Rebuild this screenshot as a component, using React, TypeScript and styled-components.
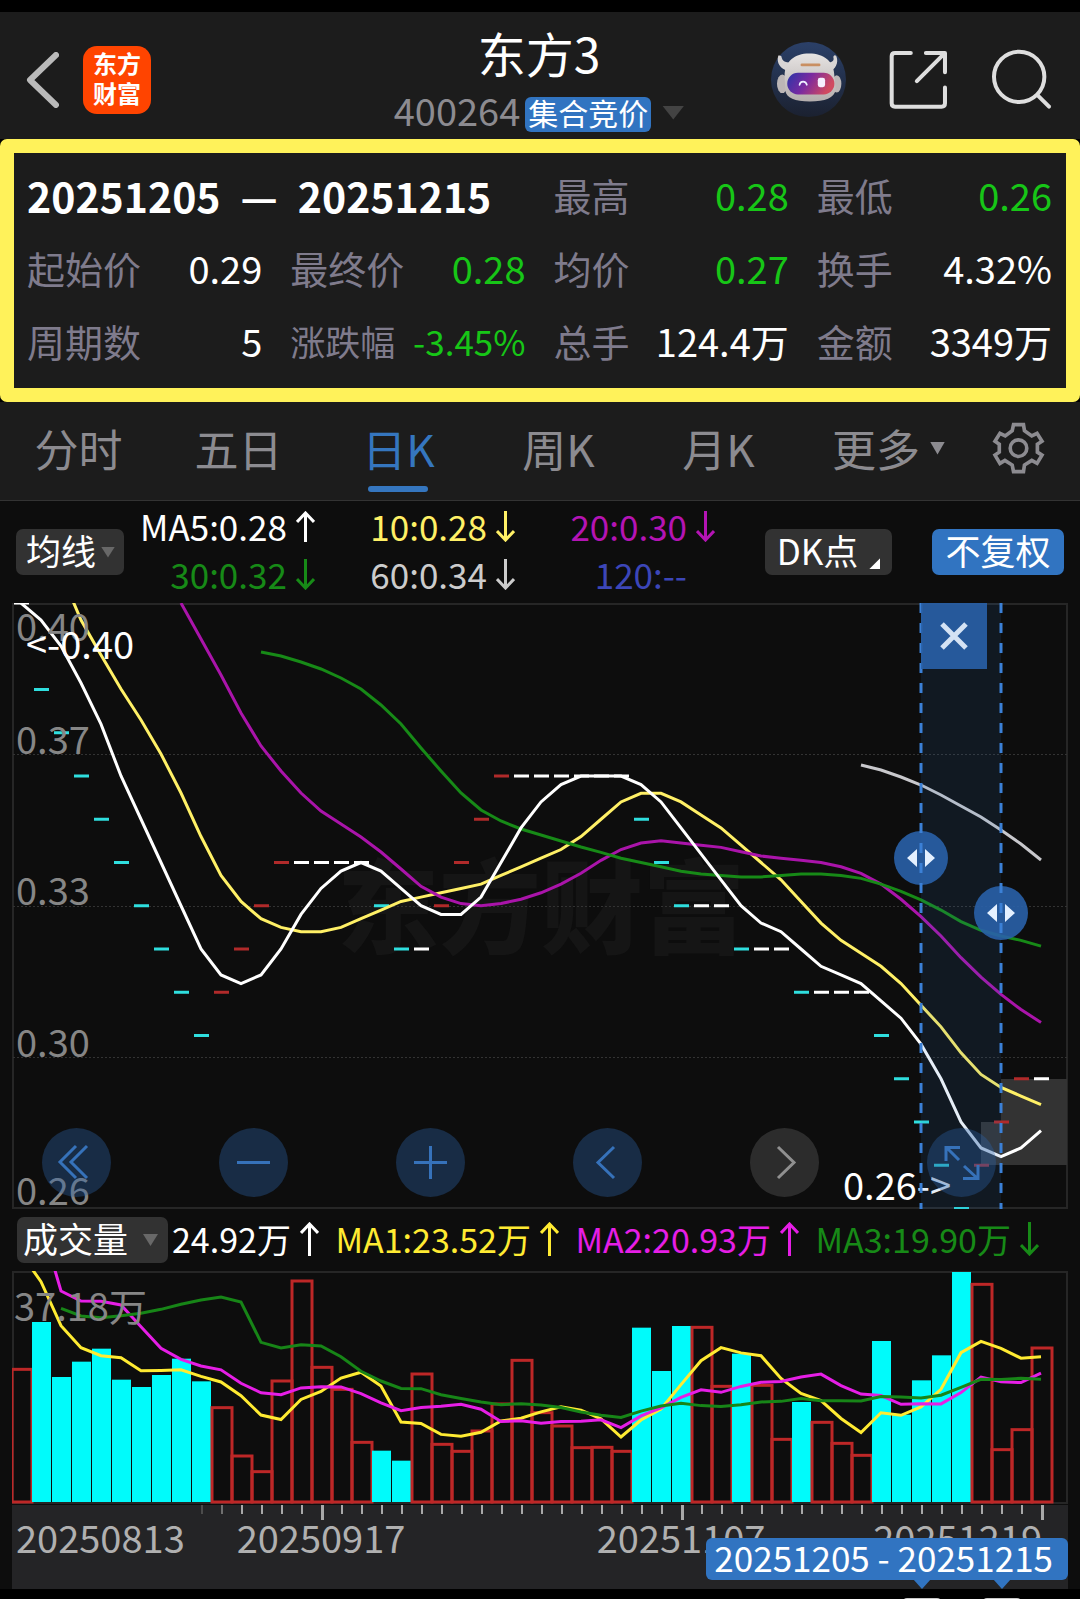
import React from "react";
import styled, { createGlobalStyle } from "styled-components";

const color = {
  header: "#1c1c1c",
  page: "#0d0d0d",
  accent: "#3174c1",
  muted: "#8c8b90",
  label: "#7f7b8c",
  green: "#17c617",
  frame: "#262626",
  cyan: "#00fbfb",
  red: "#bd2727",
};

const GlobalStyle = createGlobalStyle`
  * { box-sizing: border-box; }
  body {
    margin: 0;
    background: #000;
    color: #fff;
    font-family: "Noto Sans CJK SC", "Noto Sans", sans-serif;
  }
  button, select {
    margin: 0;
    padding: 0;
    border: 0;
    background: none;
    color: inherit;
    font: inherit;
    cursor: pointer;
  }
  svg { display: block; }
  dl, dt, dd, h1, p { margin: 0; }
`;

const Page = styled.main`
  padding-top: 12px;
  background: #000;
`;

/* ---------- header ---------- */

const Header = styled.header`
  display: grid;
  grid-template-columns: 1fr auto 1fr;
  align-items: center;
  height: 127px;
  padding: 0 28px 0 26px;
  background: ${color.header};
`;

const HeaderSide = styled.div<{ $end?: boolean; $gap: number }>`
  display: flex;
  align-items: center;
  justify-content: ${(p) => (p.$end ? "flex-end" : "flex-start")};
  gap: ${(p) => p.$gap}px;
  padding-top: 8px;
`;

const IconButton = styled.button`
  display: flex;
  align-items: center;
  justify-content: center;
  flex: none;
`;

const Logo = styled.a`
  display: flex;
  flex-direction: column;
  align-items: center;
  justify-content: center;
  width: 68px;
  height: 68px;
  padding-bottom: 4px;
  border-radius: 14px;
  background: #ff4400;
  color: #fff;
  font-size: 24px;
  font-weight: 700;
  line-height: 30px;
  text-decoration: none;
`;

const Titles = styled.div`
  display: flex;
  flex-direction: column;
  align-items: center;
`;

const Title = styled.h1`
  font-size: 48px;
  font-weight: 400;
  line-height: 66px;
`;

const SubTitle = styled.div`
  display: flex;
  align-items: flex-end;
  height: 48px;
  padding-bottom: 1px;

  button { height: 38px; }
`;

const Code = styled.span`
  margin-right: 5px;
  color: ${color.muted};
  font-size: 38px;
  line-height: 44px;
`;

const Badge = styled.span`
  margin-right: 11px;
  padding: 0 3px 4px;
  border-radius: 6px;
  background: ${color.accent};
  font-size: 30px;
  line-height: 31px;
`;

/* ---------- interval statistics ---------- */

const Stats = styled.dl`
  display: grid;
  grid-template-columns: repeat(4, 1fr);
  column-gap: 28px;
  grid-auto-rows: 73px;
  padding: 5px 14px 11px 13px;
  border: 14px solid #fff25a;
  border-radius: 7px;
  background: ${color.header};
`;

const Stat = styled.div<{ $tight?: boolean }>`
  display: flex;
  align-items: center;
  justify-content: space-between;
  font-size: ${(p) => (p.$tight ? 35 : 38)}px;
  line-height: 48px;
  white-space: nowrap;
`;

const StatName = styled.dt`
  color: ${color.label};
`;

const StatValue = styled.dd<{ $down?: boolean }>`
  color: ${(p) => (p.$down ? color.green : "#fff")};
`;

const Range = styled.div`
  display: flex;
  align-items: center;
  gap: 20px;
  grid-column: span 2;
  font-size: 41px;
  font-weight: 700;
  line-height: 48px;
  white-space: nowrap;
`;

/* ---------- period tabs ---------- */

const Tabs = styled.nav`
  display: grid;
  grid-template-columns: repeat(6, 4fr) 3fr;
  height: 99px;
  border-bottom: 1px solid #333;
  background: ${color.header};
`;

const Tab = styled.button<{ $active?: boolean; $more?: boolean }>`
  display: flex;
  align-items: center;
  justify-content: center;
  gap: 10px;
  position: relative;
  padding: 0 3px 6px ${(p) => (p.$more ? 20 : 0)}px;
  color: ${(p) => (p.$active ? "#3576bf" : color.muted)};
  font-size: 44px;
  line-height: 60px;
  white-space: nowrap;

  &::after {
    content: "";
    display: ${(p) => (p.$active ? "block" : "none")};
    position: absolute;
    bottom: 8px;
    left: calc(50% - 32px);
    width: 60px;
    height: 6px;
    border-radius: 3px;
    background: #3576bf;
  }
`;

/* ---------- indicator bars ---------- */

const Triangle = styled.i<{ $w: number; $h: number; $c: string }>`
  width: ${(p) => p.$w}px;
  height: ${(p) => p.$h}px;
  background: ${(p) => p.$c};
  clip-path: polygon(0 0, 100% 0, 50% 100%);
  pointer-events: none;
`;

const IndicatorBar = styled.section`
  display: flex;
  align-items: center;
  height: 102px;
  padding: 0 16px;
  background: ${color.page};
`;

const Picker = styled.label<{ $wide?: boolean }>`
  display: grid;
  grid-template-columns: 1fr auto;
  align-items: center;
  flex: none;
  width: ${(p) => (p.$wide ? 151 : 108)}px;
  height: 46px;
  padding-right: ${(p) => (p.$wide ? 10 : 9)}px;
  border-radius: 7px;
  background: #323232;

  select {
    grid-area: 1 / 1 / 2 / 3;
    appearance: none;
    height: 54px;
    margin: -6px 0;
    padding: 0 0 4px ${(p) => (p.$wide ? 6 : 10)}px;
    font-size: 35px;
    line-height: 50px;
    outline: none;
  }
  i { grid-area: 1 / 2; }
`;

const Averages = styled.div`
  display: grid;
  grid-template-columns: auto 1fr 1fr;
  flex: 1;
  padding: 0 0 4px 16px;
`;

const Average = styled.span<{ $c: string; $flat?: boolean }>`
  display: flex;
  align-items: center;
  justify-content: flex-end;
  gap: 9px;
  padding-right: ${(p) => (p.$flat ? 28 : 0)}px;
  color: ${(p) => p.$c};
  font-size: 35px;
  line-height: 48px;
  white-space: nowrap;
`;

const Chip = styled.button<{ $accent?: boolean }>`
  display: flex;
  align-items: center;
  justify-content: center;
  gap: 11px;
  flex: none;
  width: ${(p) => (p.$accent ? 132 : 127)}px;
  height: 46px;
  padding-bottom: 4px;
  margin-left: ${(p) => (p.$accent ? 40 : 50)}px;
  border-radius: 7px;
  background: ${(p) => (p.$accent ? color.accent : "#323232")};
  font-size: 35px;
  line-height: 42px;
  white-space: nowrap;
`;

const Corner = styled.i`
  align-self: flex-end;
  width: 11px;
  height: 11px;
  margin-bottom: 2px;
  background: #fff;
  clip-path: polygon(100% 0, 100% 100%, 0 100%);
`;

const VolumeBar = styled.section`
  display: flex;
  align-items: center;
  height: 62px;
  padding: 0 41px 0 17px;
  background: ${color.page};
`;

const VolumeValues = styled.div`
  display: flex;
  align-items: center;
  justify-content: space-between;
  flex: 1;
  padding: 0 0 2px 4px;
`;

const VolumeValue = styled.span<{ $c: string }>`
  display: flex;
  align-items: center;
  gap: 9px;
  color: ${(p) => p.$c};
  font-size: 34px;
  line-height: 46px;
  white-space: nowrap;
`;

/* ---------- charts ---------- */

const ChartArea = styled.section`
  position: relative;
  padding: 0 12px;
  background: ${color.page};

  svg.plot { width: 100%; height: auto; }
  text { font-size: 38px; }
`;

const Overlay = styled.div`
  position: absolute;
  inset: 0 12px;
  pointer-events: none;
`;

const CloseButton = styled.button`
  position: absolute;
  top: 0;
  display: flex;
  align-items: center;
  justify-content: center;
  width: 66px;
  height: 66px;
  background: rgba(41, 97, 168, 0.9);
  pointer-events: auto;
`;

const Controls = styled.div`
  position: absolute;
  right: 72px;
  bottom: 12px;
  left: 30px;
  display: flex;
  justify-content: space-between;
`;

const RoundButton = styled.button<{ $disabled?: boolean }>`
  display: flex;
  align-items: center;
  justify-content: center;
  width: 69px;
  height: 69px;
  border-radius: 50%;
  background: ${(p) => (p.$disabled ? "rgba(64,64,64,.62)" : "rgba(43,99,166,.37)")};
  color: ${(p) => (p.$disabled ? "#909090" : "#3672ba")};
  pointer-events: auto;
`;

const DateTip = styled.output`
  position: absolute;
  top: 33px;
  right: 0;
  padding: 0 15px 4px 8px;
  border-radius: 6px;
  background: ${color.accent};
  font-size: 35px;
  line-height: 38px;
  white-space: nowrap;
`;

const Scrubber = styled.div`
  position: relative;
  height: 10px;
  overflow: hidden;
`;

const Thumb = styled.i`
  position: absolute;
  top: 9px;
  width: 38px;
  height: 38px;
  margin-left: -19px;
  border-radius: 4px;
  background: #c8c8c8;
`;

/* ---------- data ---------- */

const W = 1056;
const STEP = 20;
const xAt = (i: number) => 9 + STEP * i;
const CENT = 43.25;

// Closing price of each session, in cents below 0.40.
const drops = [
  0, 2, 3, 4, 5, 6, 7, 8, 9, 10, 9, 8, 7, 6, 6, 6, 6, 6, 7, 8, 8, 7, 6, 5, 4, 4,
  4, 4, 4, 4, 4, 5, 6, 7, 7, 7, 8, 8, 8, 9, 9, 9, 9, 10, 11, 12, 13, 14, 13, 12,
  11, 11,
];

// Traded volume of each session, 690 being the axis maximum of 37.18万.
const volumes = [
  398, 540, 375, 421, 460, 367, 345, 381, 430, 362, 283, 138, 91, 363, 663, 404,
  338, 179, 154, 124, 384, 173, 152, 213, 294, 425, 268, 228, 163, 164, 152, 523,
  393, 528, 524, 347, 445, 350, 188, 300, 239, 176, 140, 483, 262, 365, 440, 690,
  653, 157, 217, 462,
];

const RANGE_START = 45;
const RANGE_END = 49;

type Point = [number, number];

// The lead values cover the sessions whose window starts before the first bar.
function average(
  data: number[],
  size: number,
  leadFrom: number,
  lead: number[],
  toY: (v: number) => number
): Point[] {
  const points: Point[] = lead.map((y, n) => [xAt(leadFrom + n), y]);
  for (let i = size - 1; i < data.length; i++) {
    const sum = data.slice(i - size + 1, i + 1).reduce((a, b) => a + b, 0);
    points.push([xAt(i), toY(sum / size)]);
  }
  return points;
}

const priceY = (v: number) => v * CENT;
const volumeY = (v: number) => 231 - v / 3;

const priceLines: [string, Point[]][] = [
  ["#c8c8cc", average(drops, 60, 42, [162, 167, 174, 182, 192, 203, 214, 227, 241, 257], priceY)],
  ["#fff066", average(drops, 10, 2, [-30, 17, 52, 86, 117, 151, 190], priceY)],
  ["#aa14aa", average(drops, 20, 8, [0, 36, 72, 110, 143, 168, 190, 208, 221, 234, 249], priceY)],
  [
    "#178a17",
    average(drops, 30, 12, [49, 53, 59, 66, 75, 86, 102, 121, 145, 168, 190, 207, 218, 226, 232, 238, 244], priceY),
  ],
  ["#ffffff", average(drops, 5, 0, [0, 17, 43, 80], priceY)],
];

const volumeLines: [string, Point[]][] = [
  ["#ffeb32", average(volumes, 5, 0, [746, 661, 529, 463].map(volumeY), volumeY)],
  ["#e61ee6", average(volumes, 10, 1, [838, 633, 603, 602, 591, 526, 461, 428].map(volumeY), volumeY)],
  [
    "#178517",
    average(
      volumes,
      20,
      2,
      [581, 558, 553, 559, 566, 578, 593, 606, 615, 600, 479, 462, 472, 468, 436, 392, 363].map(volumeY),
      volumeY
    ),
  ],
];

const toPoints = (points: Point[]) => points.map((p) => p.join(",")).join(" ");

/* ---------- pieces ---------- */

function Arrow({ up, tall }: { up?: boolean; tall?: boolean }) {
  const h = tall ? 34 : 31;
  return (
    <svg width="19" height={h} viewBox={`0 0 19 ${h}`} fill="none" stroke="currentColor" strokeWidth="3" role="img" aria-label={up ? "上升" : "下降"}>
      <g transform={up ? undefined : `rotate(180 9.5 ${h / 2})`}>
        <path d={`M9.500 2V${h}M1 11L9.500 2L18 11`} />
      </g>
    </svg>
  );
}

function Robot() {
  return (
    <svg width="75" height="75" viewBox="33 37 226 226">
      <defs>
        <linearGradient id="sky" x1="0" y1="0" x2="0" y2="1">
          <stop offset="0" stopColor="#2b4068" />
          <stop offset="1" stopColor="#1b2130" />
        </linearGradient>
        <linearGradient id="visor" x1="0" y1="0" x2="1" y2="0.300">
          <stop offset="0" stopColor="#2a35a8" />
          <stop offset="0.500" stopColor="#7a2aa0" />
          <stop offset="1" stopColor="#d04a60" />
        </linearGradient>
        <linearGradient id="shell" x1="0" y1="0" x2="0" y2="1">
          <stop offset="0" stopColor="#e6e3e2" />
          <stop offset="1" stopColor="#b4aead" />
        </linearGradient>
      </defs>
      <circle cx="146" cy="150" r="113" fill="url(#sky)" />
      <ellipse cx="67" cy="163" rx="16" ry="28" fill="#bcb6b6" />
      <ellipse cx="231" cy="163" rx="14" ry="26" fill="#bcb6b6" />
      <path d="M84 124C62 120 48 100 55 78C62 76 66 80 65 84C68 96 78 100 92 98ZM206 98C218 100 224 92 221 84C220 78 226 74 230 80C238 100 226 120 212 124Z" fill="#d8d5d5" />
      <path d="M74 140C74 96 104 72 148 72C192 72 224 96 224 140L228 180C224 206 196 216 150 216C104 216 80 206 76 184Z" fill="url(#shell)" />
      <rect x="82" y="130" width="142" height="65" rx="32" fill="url(#visor)" />
      <rect x="122" y="102" width="60" height="8" rx="4" fill="#c98f62" />
      <path d="M119 166C121 153 138 153 141 166" fill="none" stroke="#eef" strokeWidth="5" strokeLinecap="round" />
      <rect x="174" y="145" width="22" height="28" rx="7" fill="#f6efff" />
    </svg>
  );
}

function PriceChart() {
  const from = xAt(RANGE_START);
  const to = xAt(RANGE_END);
  return (
    <svg className="plot" viewBox={`0 0 ${W} 606`} role="img" aria-label="日K线">
      <g fill="#151515" fontWeight="900">
        <text x="325" y="343" style={{ fontSize: 102 }}>东方财富</text>
      </g>
      <rect x="1" y="1" width="1054" height="604" fill="none" stroke={color.frame} strokeWidth="2" />
      <g stroke="#333" strokeDasharray="2 2">
        {[151, 303, 454].map((y) => (
          <path key={y} d={`M1 ${y}.500H1055`} />
        ))}
      </g>
      <g fill="#333333">
        <rect x="989" y="476" width="66" height="86" />
        <rect x="969" y="519" width="20" height="43" />
      </g>
      {drops.map((drop, i) => {
        const before = i ? drops[i - 1] : drop;
        const fill = drop > before ? "#2fdede" : drop < before ? "#b02a2a" : "#fff";
        return <rect key={i} x={xAt(i) - 7} y={drop * CENT - 1.5} width="15" height="3" fill={fill} />;
      })}
      {priceLines.map(([stroke, points]) => (
        <polyline key={stroke} points={toPoints(points)} fill="none" stroke={stroke} strokeWidth="3" />
      ))}
      <g fill="#868686">
        <text x="4" y="38">0.40</text>
        <text x="4" y="151">0.37</text>
        <text x="4" y="302">0.33</text>
        <text x="4" y="454">0.30</text>
        <text x="4" y="602">0.26</text>
      </g>
      <g fill="#fff">
        <text x="14" y="56">&lt;-0.40</text>
        <text x="831" y="597">0.26-&gt;</text>
      </g>
      <rect x={from} y="0" width={to - from} height="606" fill="#3174c1" opacity="0.120" />
      {[{ x: from, y: 255 }, { x: to, y: 310 }].map(({ x, y }) => (
        <g key={x}>
          <circle cx={x} cy={y} r="27" fill="#2961a8" opacity="0.900" />
          <path d={`M${x} 0V606`} stroke="#3b80d6" strokeWidth="3" strokeDasharray="10 10" />
          <path d={`M${x - 4} ${y - 9}V${y + 9}L${x - 14} ${y}ZM${x + 4} ${y - 9}V${y + 9}L${x + 14} ${y}Z`} fill="#e4f0ff" />
        </g>
      ))}
    </svg>
  );
}

function VolumeChart() {
  return (
    <svg className="plot" viewBox={`0 0 ${W} 234`} role="img" aria-label="成交量">
      <rect x="1" y="1" width="1054" height="231" fill="none" stroke={color.frame} strokeWidth="2" />
      {volumes.map((v, i) => {
        const falling = i > 0 && drops[i] > drops[i - 1];
        const y = volumeY(v);
        return falling ? (
          <rect key={i} x={xAt(i) - 9} y={y} width="19" height={231 - y} fill={color.cyan} />
        ) : (
          <rect key={i} x={xAt(i) - 9} y={y} width="20" height={231 - y} fill="none" stroke={color.red} strokeWidth="3" />
        );
      })}
      {volumeLines.map(([stroke, points]) => (
        <polyline key={stroke} points={toPoints(points)} fill="none" stroke={stroke} strokeWidth="3" />
      ))}
      <text x="2" y="50" fill="#868686">37.18万</text>
    </svg>
  );
}

function DateAxis() {
  const major = [15, 33, 51];
  return (
    <svg className="plot" viewBox={`0 0 ${W} 84`} role="img" aria-label="日期">
      <rect width={W} height="84" fill="#242426" />
      {volumes.map((_, i) => {
        if (i < 9) return null;
        const long = major.includes(i);
        return (
          <rect
            key={i}
            x={xAt(i)}
            y="0"
            width={long ? 3 : 2}
            height={long ? 15 : 9}
            fill={i === 9 ? "#4c4c4c" : i === 10 ? "#707070" : "#a8a8a8"}
          />
        );
      })}
      <g fill="#b0b0b0">
        <text x="4" y="48">20250813</text>
        <text x={xAt(15)} y="48" textAnchor="middle">20250917</text>
        <text x={xAt(33)} y="48" textAnchor="middle">20251107</text>
        <text x={xAt(51) + 1} y="48" textAnchor="end">20251219</text>
      </g>
      {[RANGE_START, RANGE_END].map((i) => (
        <path key={i} d={`M${xAt(i) - 8} 74h18l-9 10z`} fill={color.accent} />
      ))}
    </svg>
  );
}

const stats: { name: string; value: string; down?: boolean; tight?: boolean }[] = [
  { name: "最高", value: "0.28", down: true },
  { name: "最低", value: "0.26", down: true },
  { name: "起始价", value: "0.29" },
  { name: "最终价", value: "0.28", down: true },
  { name: "均价", value: "0.27", down: true },
  { name: "换手", value: "4.32%" },
  { name: "周期数", value: "5" },
  { name: "涨跌幅", value: "-3.45%", down: true, tight: true },
  { name: "总手", value: "124.4万" },
  { name: "金额", value: "3349万" },
];

const controls: { name: string; path: string; disabled?: boolean }[] = [
  { name: "最早", path: "M34 18L18 34L34 50M45 18L29 34L45 50" },
  { name: "缩小", path: "M18 34.500H51" },
  { name: "放大", path: "M18 34.500H51M34.500 18V51" },
  { name: "上一个", path: "M41 19L25 34.500L41 50" },
  { name: "下一个", path: "M28 19L44 34.500L28 50", disabled: true },
  { name: "全屏", path: "M19 33V19.500H33M20 20L32 32M51 37V50.500H36M50 50L37 38" },
];

export default function App() {
  return (
    <Page>
      <GlobalStyle />
      <Header>
        <HeaderSide $gap={24}>
          <IconButton aria-label="返回">
            <svg width="33" height="56" viewBox="0 0 33 56" fill="none" stroke="#bababa" strokeWidth="6" strokeLinecap="round" strokeLinejoin="round">
              <path d="M30 3L4 28L30 53" />
            </svg>
          </IconButton>
          <Logo href="#home">
            <span>东方</span>
            <span>财富</span>
          </Logo>
        </HeaderSide>
        <Titles>
          <Title>东方3</Title>
          <SubTitle>
            <Code>400264</Code>
            <Badge>集合竞价</Badge>
            <IconButton aria-label="更多信息">
              <Triangle $w={22} $h={14} $c="#434343" />
            </IconButton>
          </SubTitle>
        </Titles>
        <HeaderSide $end $gap={43}>
          <IconButton aria-label="助手">
            <Robot />
          </IconButton>
          <IconButton aria-label="分享">
            <svg width="59" height="59" viewBox="52 60 176 176" fill="none" stroke="#dedede" strokeWidth="12" strokeLinecap="round" strokeLinejoin="round">
              <path d="M117 69H70Q60 69 60 79V219Q60 229 70 229H209Q219 229 219 219V172M162 69H219V126M217 71L135 153" />
            </svg>
          </IconButton>
          <IconButton aria-label="搜索">
            <svg width="61" height="61" viewBox="360 55 184 184" fill="none" stroke="#dedede" strokeWidth="12" strokeLinecap="round">
              <circle cx="445" cy="139" r="76" />
              <path d="M501 195L535 229" />
            </svg>
          </IconButton>
        </HeaderSide>
      </Header>

      <Stats>
        <Range>
          <span>20251205</span>
          <span>—</span>
          <span>20251215</span>
        </Range>
        {stats.map((s) => (
          <Stat key={s.name} $tight={s.tight}>
            <StatName>{s.name}</StatName>
            <StatValue $down={s.down}>{s.value}</StatValue>
          </Stat>
        ))}
      </Stats>

      <Tabs>
        <Tab>分时</Tab>
        <Tab>五日</Tab>
        <Tab $active aria-current="true">日K</Tab>
        <Tab>周K</Tab>
        <Tab>月K</Tab>
        <Tab $more>
          更多
          <Triangle $w={15} $h={13} $c={color.muted} />
        </Tab>
        <Tab aria-label="设置">
          <svg width="53" height="53" viewBox="36 36 160 160" fill="none" stroke="currentColor" strokeWidth="11">
            <path d="M101 44H131L134 62L156 78L172 70L187 94L173 103V127L187 136L172 161L156 152L134 166L131 186H101L97 166L75 152L60 161L45 136L58 127V103L45 94L60 70L76 78L97 62Z" />
            <circle cx="116" cy="115" r="25" />
          </svg>
        </Tab>
      </Tabs>

      <IndicatorBar>
        <Picker>
          <select aria-label="主图指标" defaultValue="均线">
            <option>均线</option>
          </select>
          <Triangle $w={14} $h={11} $c="#686868" />
        </Picker>
        <Averages>
          <Average $c="#fff">MA5:0.28<Arrow up /></Average>
          <Average $c="#fff066">10:0.28<Arrow /></Average>
          <Average $c="#b414b4">20:0.30<Arrow /></Average>
          <Average $c="#178a17">30:0.32<Arrow /></Average>
          <Average $c="#cccccc">60:0.34<Arrow /></Average>
          <Average $c="#3c46b8" $flat>120:--</Average>
        </Averages>
        <Chip>
          DK点
          <Corner />
        </Chip>
        <Chip $accent>不复权</Chip>
      </IndicatorBar>

      <ChartArea>
        <PriceChart />
        <Overlay>
          <CloseButton aria-label="关闭区间统计" style={{ left: `${(xAt(RANGE_START) / W) * 100}%` }}>
            <svg width="28" height="28" viewBox="0 0 28 28" stroke="#d4e2f4" strokeWidth="5">
              <path d="M2 2L26 26M26 2L2 26" />
            </svg>
          </CloseButton>
          <Controls>
            {controls.map((c) => (
              <RoundButton key={c.name} aria-label={c.name} $disabled={c.disabled}>
                <svg width="69" height="69" viewBox="0 0 69 69" fill="none" stroke="currentColor" strokeWidth="3">
                  <path d={c.path} />
                </svg>
              </RoundButton>
            ))}
          </Controls>
        </Overlay>
      </ChartArea>

      <VolumeBar>
        <Picker $wide>
          <select aria-label="副图指标" defaultValue="成交量">
            <option>成交量</option>
          </select>
          <Triangle $w={15} $h={12} $c="#686868" />
        </Picker>
        <VolumeValues>
          <VolumeValue $c="#fff">24.92万<Arrow up tall /></VolumeValue>
          <VolumeValue $c="#ffeb32">MA1:23.52万<Arrow up tall /></VolumeValue>
          <VolumeValue $c="#e61ee6">MA2:20.93万<Arrow up tall /></VolumeValue>
          <VolumeValue $c="#178a17">MA3:19.90万<Arrow tall /></VolumeValue>
        </VolumeValues>
      </VolumeBar>

      <ChartArea>
        <VolumeChart />
      </ChartArea>
      <ChartArea>
        <DateAxis />
        <Overlay>
          <DateTip>20251205 - 20251215</DateTip>
        </Overlay>
      </ChartArea>
      <Scrubber>
        {[RANGE_START, RANGE_END].map((i) => (
          <Thumb key={i} style={{ left: `${((xAt(i) + 13) / (W + 24)) * 100}%` }} />
        ))}
      </Scrubber>
    </Page>
  );
}
